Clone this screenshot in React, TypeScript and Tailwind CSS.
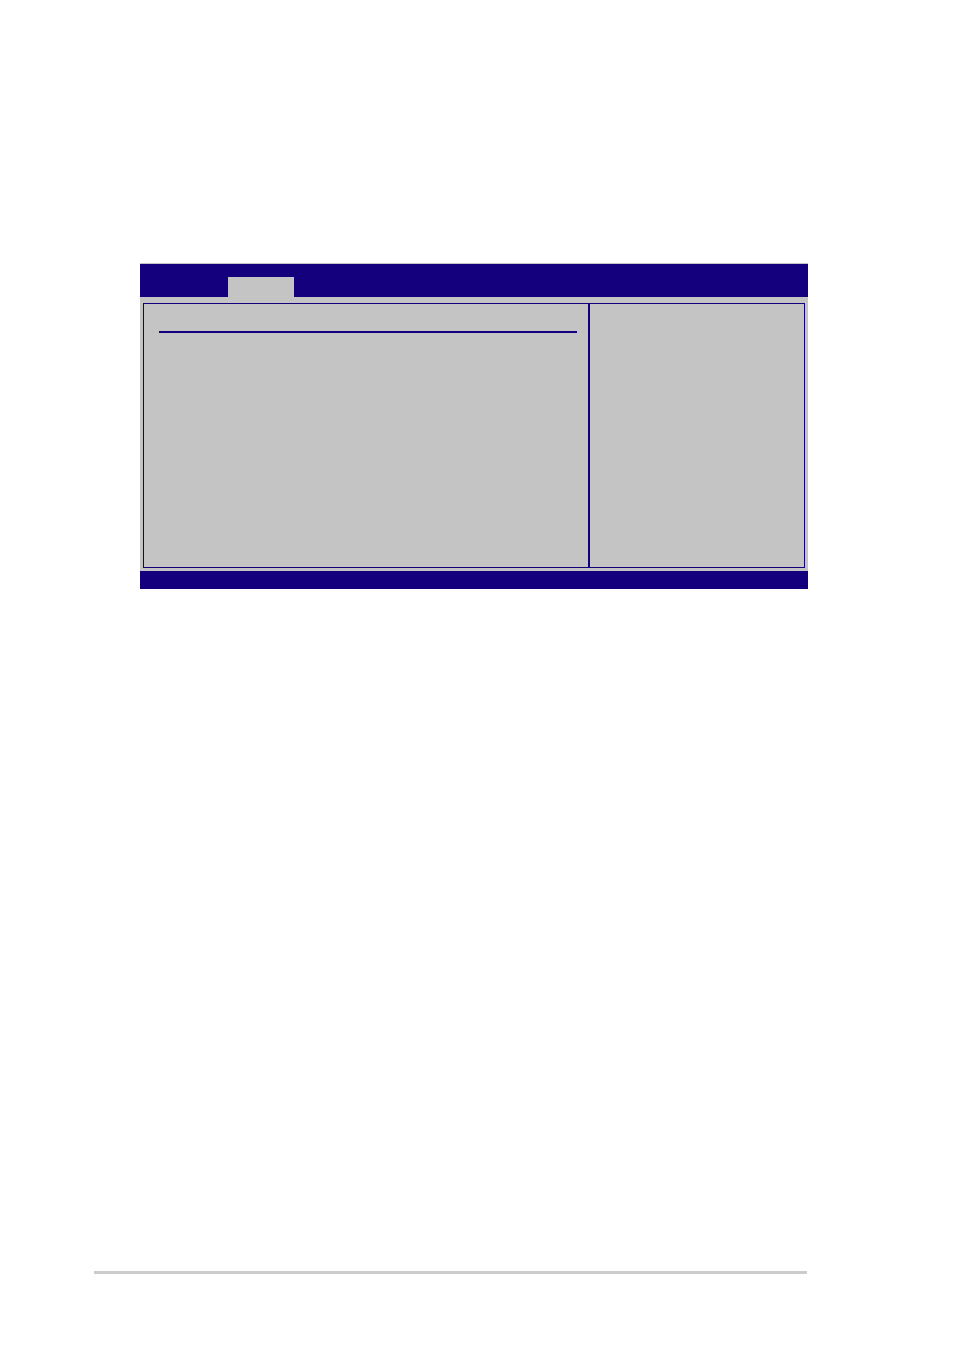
import React from 'react';

function MenuBar() {
  return (
    <nav className="flex h-[33px] items-end bg-[#14007d] pl-[88px]">
      <button type="button" aria-label="Selected menu" className="h-5 w-[66px] bg-[#c4c4c4]" />
    </nav>
  );
}

function SetupScreen() {
  return (
    <section className="border-t border-[#c4c4c4] bg-[#c4c4c4]">
      <MenuBar />

      <div className="px-[3px] pt-1.5 pb-[3px]">
        <div className="flex min-h-[265px] border border-[#14007d]">
          {/* Item list */}
          <div className="flex-1 pt-[27px] pr-[11px] pl-[15px]">
            <hr className="border-t-2 border-[#14007d]" />
          </div>

          {/* Help column */}
          <aside className="w-[216px] border-l-2 border-[#14007d]" />
        </div>
      </div>

      {/* Status bar */}
      <div className="h-[18px] bg-[#14007d]" />
    </section>
  );
}

export default function App() {
  return (
    <div className="flex min-h-screen flex-col bg-white font-['Liberation_Sans',sans-serif]">
      <main className="flex-1 pt-[263px] pr-[146px] pl-[140px]">
        <SetupScreen />
      </main>

      <footer className="pr-[147px] pb-[76px] pl-[94px]">
        <hr className="border-t-3 border-[#cccccc]" />
      </footer>
    </div>
  );
}
